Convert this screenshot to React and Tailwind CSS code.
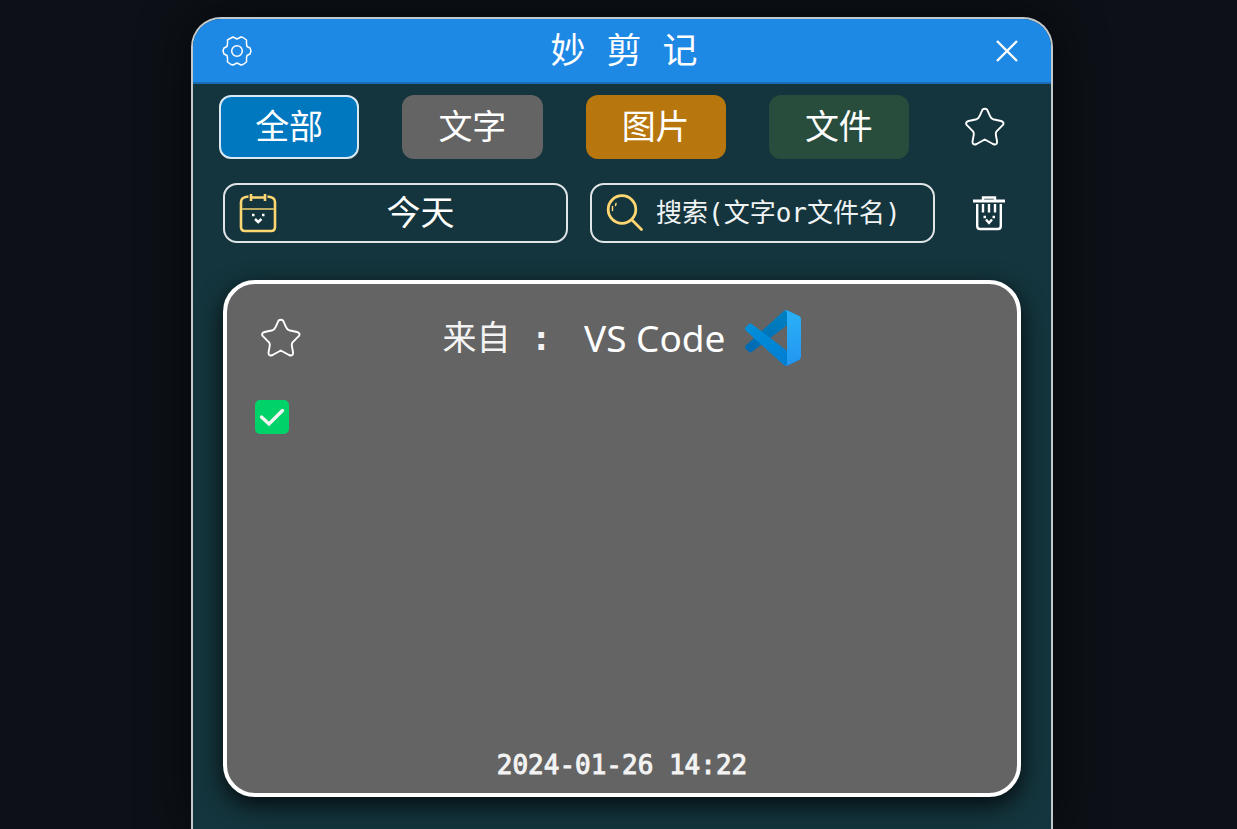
function GearIcon() {
  return (
    <svg viewBox="0 0 30 30" className="size-[30px]" fill="none" stroke="currentColor" strokeWidth="1.5" strokeLinejoin="round" strokeLinecap="round" aria-hidden="true">
      <path d="M9 2L11 1L13 2L15 3L17 2L19 1L21 1.5L24.5 4V8L25 10.5L28 12L29 15L28 18L25 19.5L24.5 22V26L21 28.5L19 29L17 28L15 27L13 28L11 29L9 28.5L5.5 26V22L5 19.5L2 18L1 15L2 12L5 10.5L5.5 8V4Z" />
      <circle cx="15" cy="15" r="5.300" />
    </svg>
  );
}

function StarIcon() {
  return (
    <svg viewBox="0 0 40 40" className="size-10" fill="none" stroke="currentColor" strokeWidth="1.9" strokeLinejoin="round" aria-hidden="true">
      <path d="M17.500 2.600Q19.800 1 22.100 2.600L24.800 8.700Q26 11.600 28 12.200L36 14Q39.400 15 38.200 17.600L31.600 24.300Q30.500 26 30.900 28L32.100 34.700Q32 38.600 28 37L19.800 32.500L11.600 37Q7.600 38.600 7.500 34.700L8.700 28Q9.100 26 8 24.300L1.400 17.600Q.2 15 3.600 14L11.600 12.200Q13.600 11.600 14.800 8.700Z" />
    </svg>
  );
}

function CloseIcon() {
  return (
    <svg viewBox="0 0 22 22" className="size-[22px]" fill="none" stroke="currentColor" strokeWidth="2.400" aria-hidden="true">
      <path d="M1 1L21 21M21 1L1 21" />
    </svg>
  );
}

function CalendarIcon() {
  return (
    <svg viewBox="0 0 38 40" className="h-10 w-[38px] shrink-0" fill="none" stroke="#ffd772" strokeWidth="2.600" aria-hidden="true">
      <path d="M9.500 3.500Q2 4 2 9V34Q2 38 6 38H32Q36 38 36 34V9Q36 4 28.500 3.500M12 4.500H26M12 1V8M26 1V8" />
      <path d="M3 16H35" stroke="#b9a962" strokeWidth="2" />
      <path d="M13 22H15.500M23 22H25.500M16 26L19.200 29L22.500 26" stroke="#fff" strokeWidth="2.400" />
    </svg>
  );
}

function SearchIcon() {
  return (
    <svg viewBox="0 0 38 38" className="size-[38px] shrink-0" fill="none" stroke="#ffd772" strokeWidth="2.800" strokeLinecap="round" aria-hidden="true">
      <circle cx="16" cy="15.500" r="13.800" />
      <path d="M26 26L35.500 35.500" />
      <path d="M10 9.500L9.500 11.500M6.500 12.500V16.500" strokeWidth="1.500" />
    </svg>
  );
}

function TrashIcon() {
  return (
    <svg viewBox="0 0 32 36" className="h-9 w-8" fill="none" stroke="currentColor" strokeWidth="2.400" aria-hidden="true">
      <path d="M0 6H32" strokeWidth="2.800" />
      <path d="M10 6V2.500H22V6M4.200 9V31Q4.200 34 7 34H25Q27.800 34 27.800 31V9" />
      <path d="M10 9V17.500M16 9V17.500M22 9V17.500M10.500 22H13M19.500 22H22M13 24.500L16 28L19 24.500" />
    </svg>
  );
}

function VsCodeLogo() {
  return (
    <svg viewBox="0 0 100 100" className="size-14 shrink-0" role="img" aria-label="VS Code">
      <defs>
        <linearGradient id="light" x1="0" y1="0" x2="0" y2="1">
          <stop offset="0" stopColor="#2bb1f7" />
          <stop offset="1" stopColor="#2196f0" />
        </linearGradient>
        <linearGradient id="mid" x1="0" y1="0" x2="1" y2="1">
          <stop offset="0" stopColor="#008fda" />
          <stop offset="1" stopColor="#007bd0" />
        </linearGradient>
        <linearGradient id="dark" x1="1" y1="0" x2="0" y2="1">
          <stop offset="0" stopColor="#0086c6" />
          <stop offset="1" stopColor="#0068b0" />
        </linearGradient>
      </defs>
      <path fill="url(#dark)" d="M96.4614 10.7962L75.8569 0.875542C73.4719 -0.272773 70.6217 0.211611 68.75 2.08333L1.29858 63.5832C-0.515693 65.2373 -0.513607 68.0937 1.30308 69.7452L6.81272 74.754C8.29793 76.1042 10.5347 76.2036 12.1338 74.9905L93.3609 13.3699C96.086 11.3026 100 13.2462 100 16.6667V16.4275C100 14.0265 98.6246 11.8378 96.4614 10.7962Z" />
      <path fill="url(#mid)" d="M96.4614 89.2038L75.8569 99.1245C73.4719 100.273 70.6217 99.7884 68.75 97.9167L1.29858 36.4169C-0.515693 34.7627 -0.513607 31.9063 1.30308 30.2548L6.81272 25.246C8.29793 23.8958 10.5347 23.7964 12.1338 25.0095L93.3609 86.6301C96.086 88.6974 100 86.7538 100 83.3334V83.5726C100 85.9735 98.6246 88.1622 96.4614 89.2038Z" />
      <path fill="url(#light)" d="M75.8578 99.1263C73.4721 100.274 70.6219 99.7885 68.75 97.9166C71.0564 100.223 75 98.5895 75 95.3278V4.67213C75 1.41039 71.0564 -0.223106 68.75 2.08329C70.6219 0.211402 73.4721 -0.273666 75.8578 0.873633L96.4587 10.7807C98.6234 11.8217 100 14.0112 100 16.4132V83.5871C100 85.9891 98.6234 88.1786 96.4586 89.2196L75.8578 99.1263Z" />
    </svg>
  );
}

function CheckMark() {
  return (
    <svg viewBox="0 0 34 34" className="size-[34px]" fill="none" role="img" aria-label="✅">
      <rect width="34" height="34" rx="5" fill="#00d26a" />
      <path d="M6.500 17L14 24L27.500 10.500" stroke="#f4f4f4" strokeWidth="3.400" strokeLinecap="round" />
    </svg>
  );
}

const tabs = [
  { label: "全部", style: "border-2 border-[#d9e8f2] bg-[#0078bf]" },
  { label: "文字", style: "bg-[#646464]" },
  { label: "图片", style: "bg-[#b8770e]" },
  { label: "文件", style: "bg-[#284d3d]" },
];

export default function App() {
  return (
    <div className="flex min-h-screen flex-col overflow-hidden bg-[#0d1117] pt-[17px] pl-[7px] font-['DejaVu_Sans_Mono','Noto_Sans_CJK_SC',monospace] text-white">
      <main className="mx-auto flex w-full max-w-[862px] flex-1 flex-col overflow-hidden rounded-t-[30px] border-x-2 border-t-2 border-[#c3c8cb] bg-[#14353d] shadow-[0_0_50px_rgba(0,0,0,0.7)]">
        <header className="flex h-[65px] items-center justify-between border-b-2 border-[#1a6db5] bg-[#1e88e5] pt-px pr-[33px] pl-[29px]">
          <button aria-label="设置"><GearIcon /></button>
          <h1 className="text-[35px] leading-10">妙 剪 记</h1>
          <button aria-label="关闭"><CloseIcon /></button>
        </header>

        <nav className="flex items-center pt-[11px] pr-[46px] pl-[26px]">
          <div className="grid flex-1 grid-cols-4 gap-[43px]">
            {tabs.map((tab) => (
              <button key={tab.label} className={`flex h-16 items-center justify-center rounded-xl text-[34px] leading-10 ${tab.style}`}>
                {tab.label}
              </button>
            ))}
          </div>
          <button aria-label="收藏" className="ml-14"><StarIcon /></button>
        </nav>

        <div className="flex items-center pt-6 pr-[46px] pl-[30px]">
          <div className="grid flex-1 grid-cols-2 gap-[22px]">
            <button className="flex h-[60px] items-center rounded-[14px] border-2 border-[#dfe4e6] pl-[14px]">
              <CalendarIcon />
              <span className="flex-1 pr-[2px] text-center text-[34px] leading-10">今天</span>
            </button>
            <label className="flex h-[60px] items-center gap-3 rounded-[14px] border-2 border-[#dfe4e6] pl-[14px]">
              <SearchIcon />
              <input aria-label="搜索" placeholder="搜索(文字or文件名)" className="h-10 w-full min-w-0 bg-transparent text-[26px] outline-none placeholder:text-[#f0f3f4]" />
            </label>
          </div>
          <button aria-label="清空" className="ml-[38px]"><TrashIcon /></button>
        </div>

        <article className="mx-[30px] mt-[37px] mb-8 flex flex-1 flex-col rounded-[32px] border-4 border-white bg-[#646464] px-7 pt-[26px] pb-2 shadow-[0_8px_24px_rgba(0,0,0,0.8)]">
          <div className="grid grid-cols-[1fr_auto_1fr] items-center">
            <button aria-label="收藏" className="justify-self-start pl-[6px]"><StarIcon /></button>
            <div className="flex items-center">
              <span className="text-[34px] leading-10 whitespace-pre text-[#f3f3f3]">来自 <b>:</b> </span>
              <span className="pr-5 pl-3 font-['Noto_Sans',sans-serif] text-[37px] leading-10">VS Code</span>
              <VsCodeLogo />
            </div>
          </div>
          <div className="flex-1 pt-[34px]"><CheckMark /></div>
          <time dateTime="2024-01-26T14:22" className="text-center text-[26px] leading-10 text-[#f3f3f3] [-webkit-text-stroke:1px]">2024-01-26 14:22</time>
        </article>
      </main>
    </div>
  );
}
